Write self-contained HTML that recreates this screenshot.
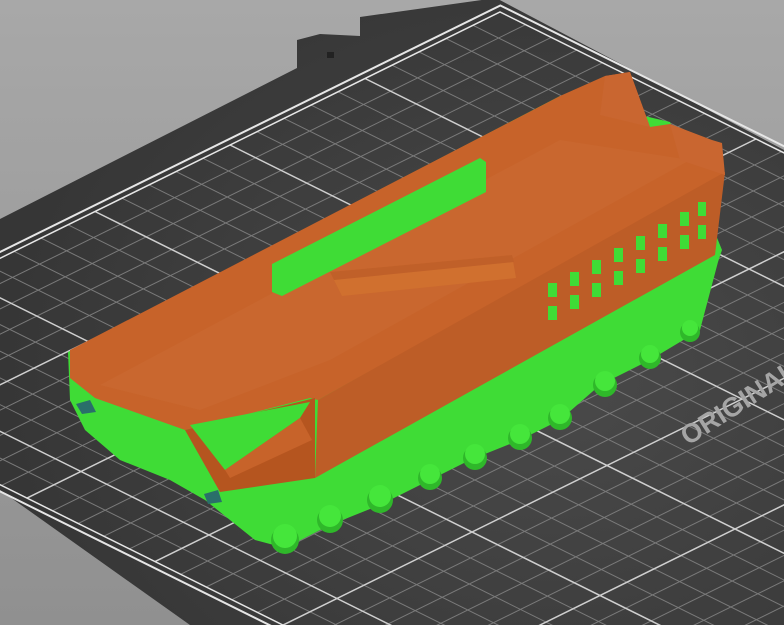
<!DOCTYPE html>
<html><head><meta charset="utf-8"><style>
html,body{margin:0;padding:0;width:784px;height:625px;overflow:hidden;background:#9c9c9c}
svg{display:block}
</style></head><body>
<svg width="784" height="625" viewBox="0 0 784 625" xmlns="http://www.w3.org/2000/svg" style="overflow:hidden">
<defs>
<linearGradient id="bg" x1="0" y1="0" x2="0" y2="1"><stop offset="0" stop-color="#a8a8a8"/><stop offset="1" stop-color="#909090"/></linearGradient>
<radialGradient id="bed" cx="0.7" cy="0.6" r="0.7"><stop offset="0" stop-color="#4a4a4a"/><stop offset="1" stop-color="#363636"/></radialGradient>
</defs>
<rect width="784" height="625" fill="url(#bg)"/>
<polygon points="0,219 297,68 297,40 320,34 360,36 360,17 496,-2 784,150 784,625 190,625 0,490" fill="url(#bed)"/>
<rect x="327" y="52" width="7" height="6" fill="#222"/>
<g transform="matrix(25.6 12.7 -27 13.3 500 12)" fill="none">
<path vector-effect="non-scaling-stroke" stroke="#7a7a7a" stroke-width="1" d="M1 0V27M2 0V27M3 0V27M4 0V27M6 0V27M7 0V27M8 0V27M9 0V27M11 0V27M12 0V27M13 0V27M14 0V27M16 0V27M17 0V27M18 0V27M19 0V27M21 0V27M22 0V27M23 0V27M24 0V27M26 0V27M27 0V27M28 0V27M29 0V27"/>
<path vector-effect="non-scaling-stroke" stroke="#7a7a7a" stroke-width="1" d="M0 1H30M0 2H30M0 3H30M0 4H30M0 6H30M0 7H30M0 8H30M0 9H30M0 11H30M0 12H30M0 13H30M0 14H30M0 16H30M0 17H30M0 18H30M0 19H30M0 21H30M0 22H30M0 23H30M0 24H30M0 26H30"/>
<path vector-effect="non-scaling-stroke" stroke="#cfcfcf" stroke-width="1.5" d="M5 0V27M10 0V27M15 0V27M20 0V27M25 0V27M0 5H30M0 10H30M0 15H30M0 20H30M0 25H30"/>
<path vector-effect="non-scaling-stroke" stroke="#e6e6e6" stroke-width="1.5" d="M30 0H0V27H30"/>
<path vector-effect="non-scaling-stroke" stroke="#e6e6e6" stroke-width="2" d="M30 -0.25H-0.25V27.25H30"/>
</g>
<text x="0" y="0" transform="translate(688,446) rotate(-32.5)" font-family="Liberation Sans, sans-serif" font-weight="bold" font-size="27" fill="#a5a5a5">ORIGINAL</text>

<polygon points="68,352 560,96 670,122 722,250 718,262 700,330 650,360 600,385 560,420 520,440 470,460 430,480 380,505 330,525 285,548 255,540 230,520 205,500 170,480 120,460 85,430 70,400" fill="#3fdc36"/>
<g fill="#2fb82a">
<circle cx="285" cy="540" r="14"/><circle cx="330" cy="520" r="13"/><circle cx="380" cy="500" r="13"/><circle cx="430" cy="478" r="12"/><circle cx="475" cy="458" r="12"/><circle cx="520" cy="438" r="12"/><circle cx="560" cy="418" r="12"/><circle cx="605" cy="385" r="12"/><circle cx="650" cy="358" r="11"/><circle cx="690" cy="332" r="10"/>
</g>
<g fill="#45e63b">
<circle cx="285" cy="536" r="12"/><circle cx="330" cy="516" r="11"/><circle cx="380" cy="496" r="11"/><circle cx="430" cy="474" r="10"/><circle cx="475" cy="454" r="10"/><circle cx="520" cy="434" r="10"/><circle cx="560" cy="414" r="10"/><circle cx="605" cy="381" r="10"/><circle cx="650" cy="354" r="9"/><circle cx="690" cy="328" r="8"/>
</g>
<polygon points="70,350 560,96 605,76 630,72 650,127 670,124 710,140 720,143 725,175 318,400 310,398 185,430 95,398 70,378" fill="#c7632a"/>
<polygon points="100,385 560,140 690,160 330,360 200,410" fill="#c96b33" opacity="0.6"/>
<polygon points="318,400 725,172 715,255 315,478" fill="#bd5d27"/>
<g fill="#3fdc36">
<rect x="548" y="283" width="9" height="14"/><rect x="570" y="272" width="9" height="14"/><rect x="592" y="260" width="9" height="14"/><rect x="614" y="248" width="9" height="14"/><rect x="636" y="236" width="9" height="14"/><rect x="658" y="224" width="9" height="14"/><rect x="680" y="212" width="9" height="14"/><rect x="698" y="202" width="8" height="14"/>
<rect x="548" y="306" width="9" height="14"/><rect x="570" y="295" width="9" height="14"/><rect x="592" y="283" width="9" height="14"/><rect x="614" y="271" width="9" height="14"/><rect x="636" y="259" width="9" height="14"/><rect x="658" y="247" width="9" height="14"/><rect x="680" y="235" width="9" height="14"/><rect x="698" y="225" width="8" height="14"/>
</g>
<polygon points="185,430 315,398 315,478 220,492" fill="#b5551f"/>
<polygon points="190,425 310,402 300,418 225,470" fill="#3fdc36"/>
<polygon points="225,470 300,418 312,440 230,478" fill="#c7632a"/>
<polygon points="272,292 272,264 480,158 486,162 486,192 282,296" fill="#3fdc36"/>
<polygon points="330,272 512,255 516,278 342,296" fill="#d0702f"/>
<polygon points="330,272 512,255 514,262 334,280" fill="#c06029"/>
<polygon points="605,76 630,72 650,127 600,115" fill="#c96630"/>
<polygon points="670,124 712,140 722,143 725,175 680,160" fill="#c96630"/>
<polygon points="76,404 90,400 96,412 82,414" fill="#2a6f6a"/>
<polygon points="204,494 218,490 222,502 208,504" fill="#2a6f6a"/>
</svg>
</body></html>
